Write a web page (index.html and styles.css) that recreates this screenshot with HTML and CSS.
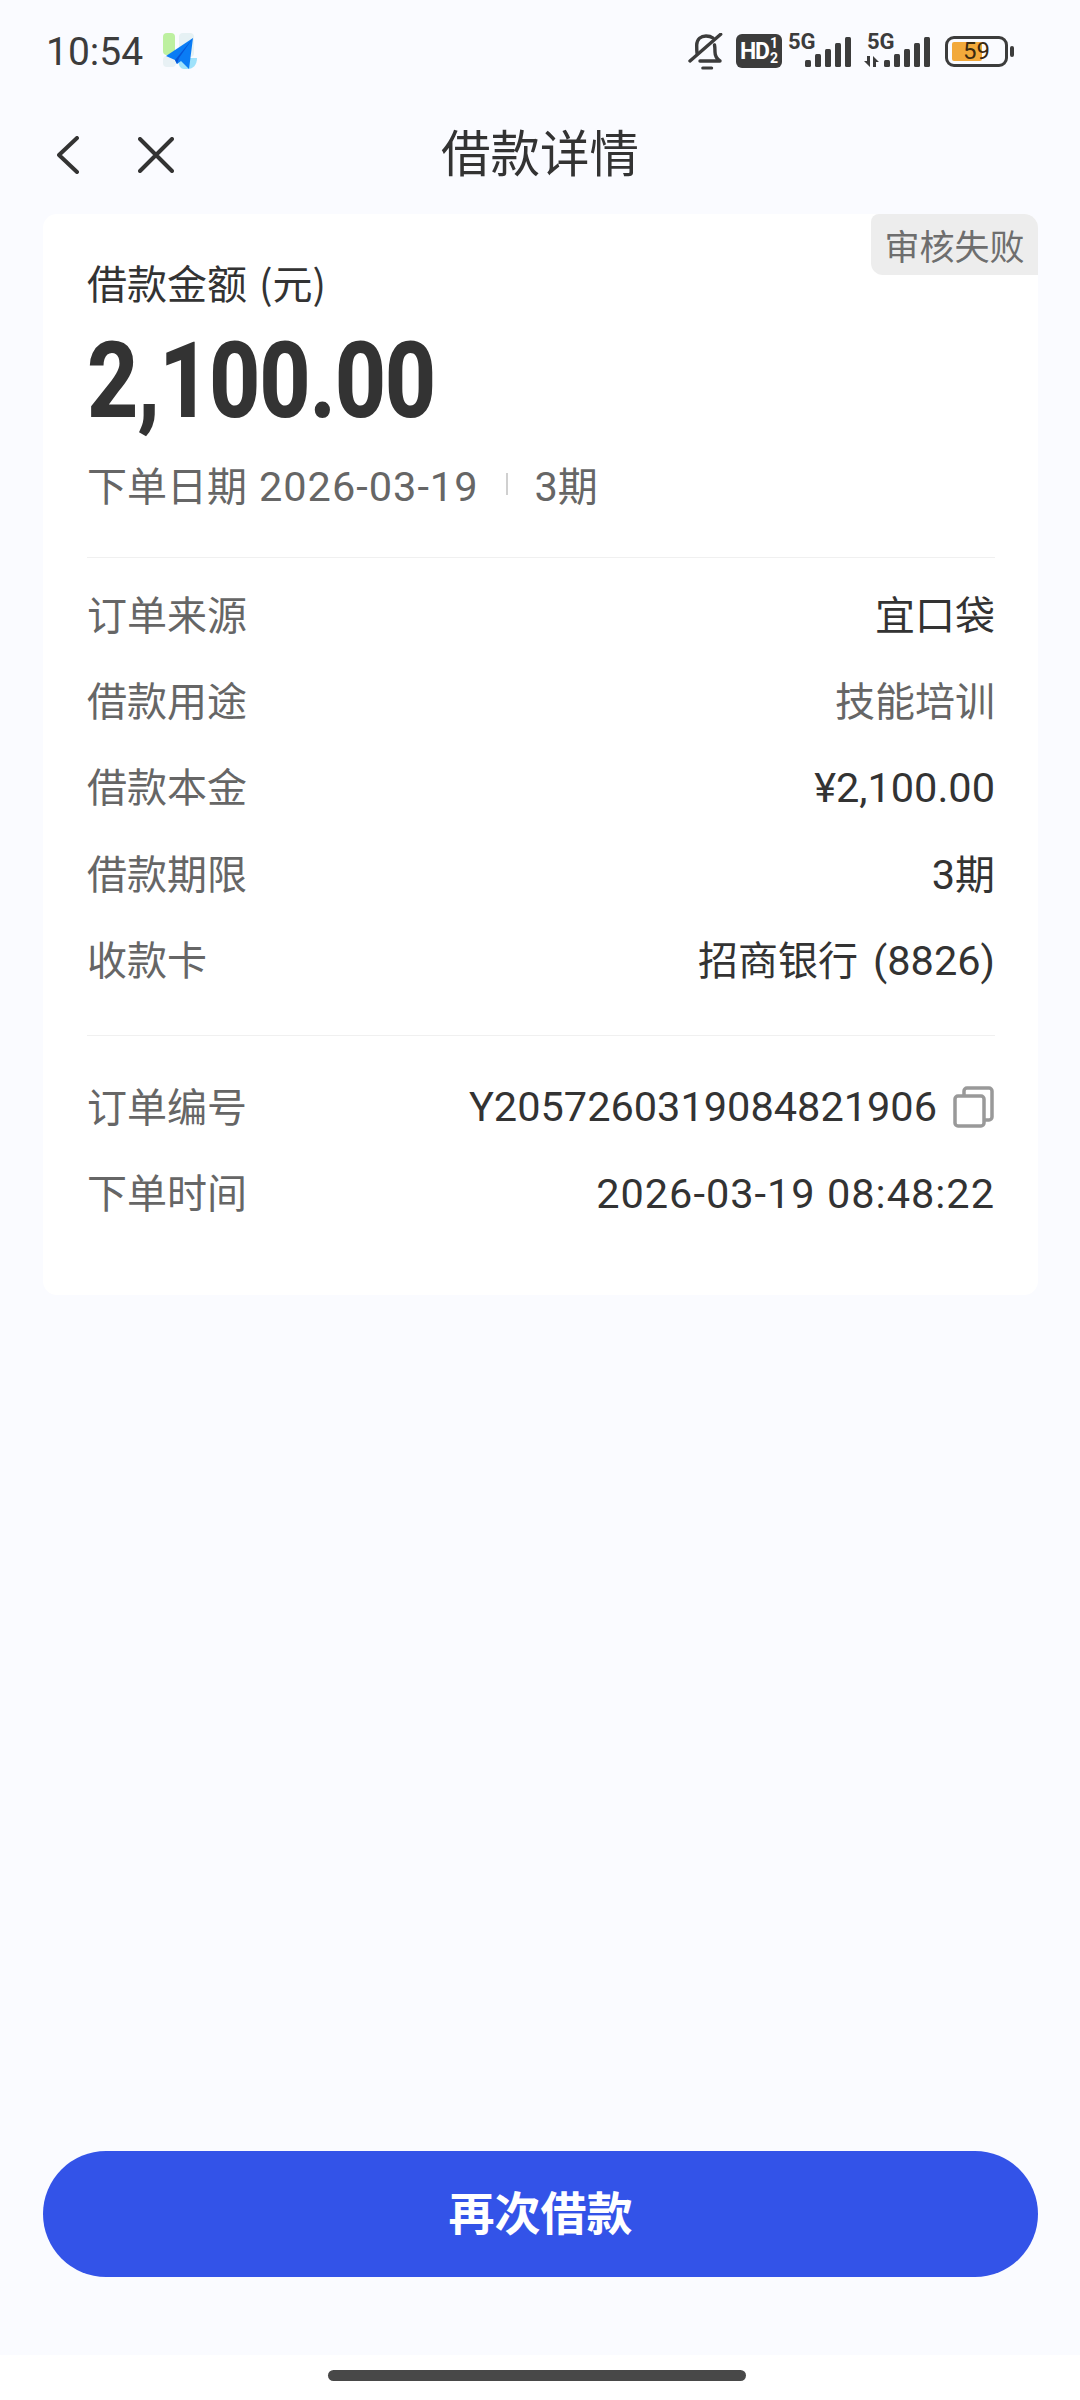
FILE: index.html
```html
<!DOCTYPE html>
<html lang="zh-CN">
<head>
    <meta charset="UTF-8">
    <title>借款详情</title>
    <link rel="stylesheet" href="styles.css">
</head>
<body>
    <div class="page">
        <div class="status-bar">
            <div class="status-left">
                <span class="clock">10:54</span>
                <svg class="app-icon" width="36" height="38" viewBox="0 0 36 38">
                    <rect x="1" y="0" width="12" height="22" rx="4" fill="#bdf0a0"/>
                    <rect x="17" y="0" width="15" height="24" rx="4" fill="#e6f1f4"/>
                    <rect x="1" y="23" width="13" height="11" rx="4" fill="#e8f1f5"/>
                    <path d="M16 25h19c0 7-4 11-9 11h-4c-4 0-6-4-6-11z" fill="#9fe2fb"/>
                    <path d="M31 5 4 23l9 4 2 4 4-3 8 8z" fill="#0a7cf5"/>
                    <path d="M31 5 13 27l2 4 2-6z" fill="#0655d8"/>
                </svg>
            </div>
            <div class="status-right">
                <svg class="icon-bell" width="36" height="38" viewBox="0 0 36 38" fill="none" stroke="#3c3c3c" stroke-width="3.4" stroke-linecap="round" stroke-linejoin="round">
                    <path d="M12 28h20c-3-2-5-5-5-9 0-3 0-5-.5-7"/>
                    <path d="M9 20c-.3-3-.3-5-.3-8C9 6 13 3 18 3c3 0 5 .5 7 2"/>
                    <path d="M2 28 32.700 1.300"/>
                    <path d="M14.700 35h9" stroke-width="3"/>
                </svg>
                <div class="hd-badge"><span class="hd-text">HD</span><span class="hd-nums"><span>1</span><span>2</span></span></div>
                <svg class="signal" width="64" height="44" viewBox="0 0 64 44">
                    <text x="0" y="21" class="net-label">5G</text>
                    <rect x="17" y="32" width="6" height="7" rx="1.500"/>
                    <rect x="27" y="26" width="6" height="13" rx="1.500"/>
                    <rect x="37" y="21" width="6" height="18" rx="1.500"/>
                    <rect x="47" y="15" width="6" height="24" rx="1.500"/>
                    <rect x="57" y="9" width="6" height="30" rx="1.500"/>
                </svg>
                <svg class="signal signal-second" width="67" height="44" viewBox="0 0 67 44">
                    <text x="3" y="21" class="net-label">5G</text>
                    <path d="M6 28v11l-6-6h3v-5z M9 28l6 6h-3v5H9z"/>
                    <rect x="20" y="32" width="6" height="7" rx="1.500"/>
                    <rect x="30" y="26" width="6" height="13" rx="1.500"/>
                    <rect x="40" y="21" width="6" height="18" rx="1.500"/>
                    <rect x="50" y="15" width="6" height="24" rx="1.500"/>
                    <rect x="60" y="9" width="6" height="30" rx="1.500"/>
                </svg>
                <div class="battery">
                    <div class="battery-body"><div class="battery-fill"></div><span class="battery-num">59</span></div>
                    <div class="battery-nub"></div>
                </div>
            </div>
        </div>

        <div class="nav">
            <div class="nav-btns">
                <svg width="22" height="38" viewBox="0 0 22 38" fill="none" stroke="#333" stroke-width="4" stroke-linecap="round" stroke-linejoin="round">
                    <path d="M20 2 2 19l18 17"/>
                </svg>
                <svg width="36" height="36" viewBox="0 0 36 36" fill="none" stroke="#333" stroke-width="4" stroke-linecap="round">
                    <path d="M2 2l32 32M34 2 2 34"/>
                </svg>
            </div>
            <div class="nav-title">借款详情</div>
        </div>

        <div class="card">
            <div class="status-tag">审核失败</div>
            <div class="amount-label">借款金额 (元)</div>
            <div class="amount">2,100.00</div>
            <div class="order-meta">
                <span class="meta-date">下单日期 <span class="num date">2026-03-19</span></span>
                <i class="meta-sep"></i>
                <span><span class="num">3</span>期</span>
            </div>
            <div class="section">
                <div class="row"><span class="row-label">订单来源</span><span class="row-value">宜口袋</span></div>
                <div class="row"><span class="row-label">借款用途</span><span class="row-value muted">技能培训</span></div>
                <div class="row"><span class="row-label">借款本金</span><span class="row-value num">¥2,100.00</span></div>
                <div class="row"><span class="row-label">借款期限</span><span class="row-value"><span class="num">3</span>期</span></div>
                <div class="row"><span class="row-label">收款卡</span><span class="row-value bank">招商银行 <span class="num">(8826)</span></span></div>
            </div>
            <div class="section section-last">
                <div class="row">
                    <span class="row-label">订单编号</span>
                    <span class="row-value with-icon">
                        <span class="num">Y2057260319084821906</span>
                        <svg width="42" height="42" viewBox="0 0 42 42" fill="none" stroke="#999" stroke-width="3.500" stroke-linejoin="round">
                            <rect x="2" y="10" width="29" height="30" rx="3"/>
                            <path d="M11 9V5a3 3 0 0 1 3-3h22a3 3 0 0 1 3 3v26a3 3 0 0 1-3 3h-4"/>
                        </svg>
                    </span>
                </div>
                <div class="row"><span class="row-label">下单时间</span><span class="row-value num date">2026-03-19 08:48:22</span></div>
            </div>
        </div>

        <div class="action">
            <button class="btn-primary">再次借款</button>
        </div>

        <div class="home-area">
            <div class="home-bar"></div>
        </div>
    </div>
</body>
</html>
```

FILE: styles.css
```css
:root {
    --bg-page: #fafbff;
    --text-primary: #333333;
    --text-secondary: #666666;
    --border-color: #f0f0f0;
    --accent-blue: #3353e8;
}

* {
    box-sizing: border-box;
}

body {
    margin: 0;
    font-family: "Noto Sans CJK SC", "Noto Sans", sans-serif;
    background-color: var(--bg-page);
    color: var(--text-primary);
}

.page {
    width: 1080px;
    height: 2400px;
    display: flex;
    flex-direction: column;
}

/* status bar */
.status-bar {
    height: 100px;
    padding: 33px 66px 0 46px;
    display: flex;
    justify-content: space-between;
    align-items: flex-start;
}

.status-left {
    display: flex;
    align-items: center;
    gap: 19px;
}

.clock {
    font-family: Roboto, sans-serif;
    font-size: 39px;
    line-height: 38px;
    color: #3c3c3c;
}

.status-right {
    display: flex;
    align-items: flex-start;
}

.icon-bell {
    margin-right: 12px;
}

.hd-badge {
    width: 46px;
    height: 34px;
    margin-top: 1px;
    margin-right: 6px;
    border-radius: 6px;
    background-color: #3c3c3c;
    color: #fff;
    font-family: Roboto, sans-serif;
    font-weight: 700;
    display: flex;
    align-items: center;
    justify-content: center;
    gap: 1px;
}

.hd-text {
    font-size: 23px;
    letter-spacing: -1px;
}

.hd-nums {
    display: flex;
    flex-direction: column;
    font-size: 14px;
    line-height: 15px;
}

.signal {
    margin-top: -5px;
    fill: #3c3c3c;
}

.signal-second {
    margin-left: 12px;
}

.net-label {
    font-family: Roboto, sans-serif;
    font-weight: 700;
    font-size: 22px;
}

.battery {
    display: flex;
    align-items: center;
    margin-left: 14px;
    margin-top: 3px;
}

.battery-body {
    position: relative;
    width: 63px;
    height: 31px;
    border: 3px solid #3c3c3c;
    border-radius: 9px;
    padding: 3px 4px;
}

.battery-fill {
    width: 30px;
    height: 19px;
    border-radius: 2px;
    background-color: #f2a93b;
}

.battery-num {
    position: absolute;
    left: 15px;
    top: 0;
    font-family: Roboto, sans-serif;
    font-size: 24px;
    line-height: 25px;
    color: #3a2a10;
}

.battery-nub {
    width: 4px;
    height: 11px;
    margin-left: 2px;
    border-radius: 2px;
    background-color: #3c3c3c;
}

/* nav */
.nav {
    position: relative;
    height: 106px;
    padding: 0 57px;
    display: flex;
    align-items: center;
}

.nav-btns {
    display: flex;
    align-items: center;
    gap: 59px;
    padding-top: 3px;
}

.nav-title {
    position: absolute;
    left: 0;
    right: 0;
    top: 21px;
    text-align: center;
    font-size: 49.500px;
    line-height: 60px;
}

/* card */
.card {
    position: relative;
    height: 1081px;
    margin: 8px 42px 0 43px;
    padding: 39px 43px 0 44px;
    background-color: #fff;
    border-radius: 14px;
}

.status-tag {
    position: absolute;
    top: 0;
    right: 0;
    width: 167px;
    height: 61px;
    border-radius: 8px 14px 0 12px;
    background-color: #ededed;
    color: #6e6e6e;
    font-size: 35px;
    line-height: 61px;
    text-align: center;
}

.amount-label {
    font-size: 40px;
    line-height: 58px;
    word-spacing: 3px;
}

.amount {
    font-family: Roboto, sans-serif;
    font-weight: 800;
    font-size: 105px;
    line-height: 120px;
    letter-spacing: -1.500px;
    margin-top: 11px;
    transform: scaleX(0.85);
    transform-origin: left center;
}

.order-meta {
    display: flex;
    align-items: center;
    height: 58px;
    margin-top: 13px;
    font-size: 40px;
    color: var(--text-secondary);
}

.meta-date {
    word-spacing: 3px;
}

.meta-sep {
    width: 2px;
    height: 22px;
    margin: 0 27px;
    background-color: #d0d0d0;
}

.num {
    font-family: Roboto, sans-serif;
    font-size: 41.500px;
    font-weight: 400;
}

.date {
    letter-spacing: 1px;
}

.section {
    margin-top: 44px;
    padding-top: 11.500px;
    padding-bottom: 33.500px;
    border-top: 1px solid var(--border-color);
}

.section + .section {
    margin-top: 0;
    padding-top: 25.500px;
    padding-bottom: 0;
}

.row {
    height: 86.400px;
    display: flex;
    justify-content: space-between;
    align-items: center;
    font-size: 40px;
}

.row-label {
    color: var(--text-secondary);
}

.row-value.muted {
    color: var(--text-secondary);
}

.row-value.num,
.with-icon {
    padding-top: 4px;
}

.bank {
    word-spacing: 6px;
}

.with-icon {
    display: flex;
    align-items: center;
    gap: 16px;
}

/* bottom */
.action {
    margin-top: auto;
    padding: 0 42px 78px 43px;
}

.btn-primary {
    display: block;
    width: 100%;
    height: 126px;
    padding: 0 0 9px;
    border: none;
    border-radius: 63px;
    background-color: var(--accent-blue);
    color: #fff;
    font-family: inherit;
    font-size: 46px;
    font-weight: 700;
    cursor: pointer;
}

.home-area {
    height: 45px;
    padding-top: 15px;
    background-color: #fff;
}

.home-bar {
    width: 418px;
    height: 11px;
    margin-left: 328px;
    border-radius: 6px;
    background-color: #484848;
}
```
